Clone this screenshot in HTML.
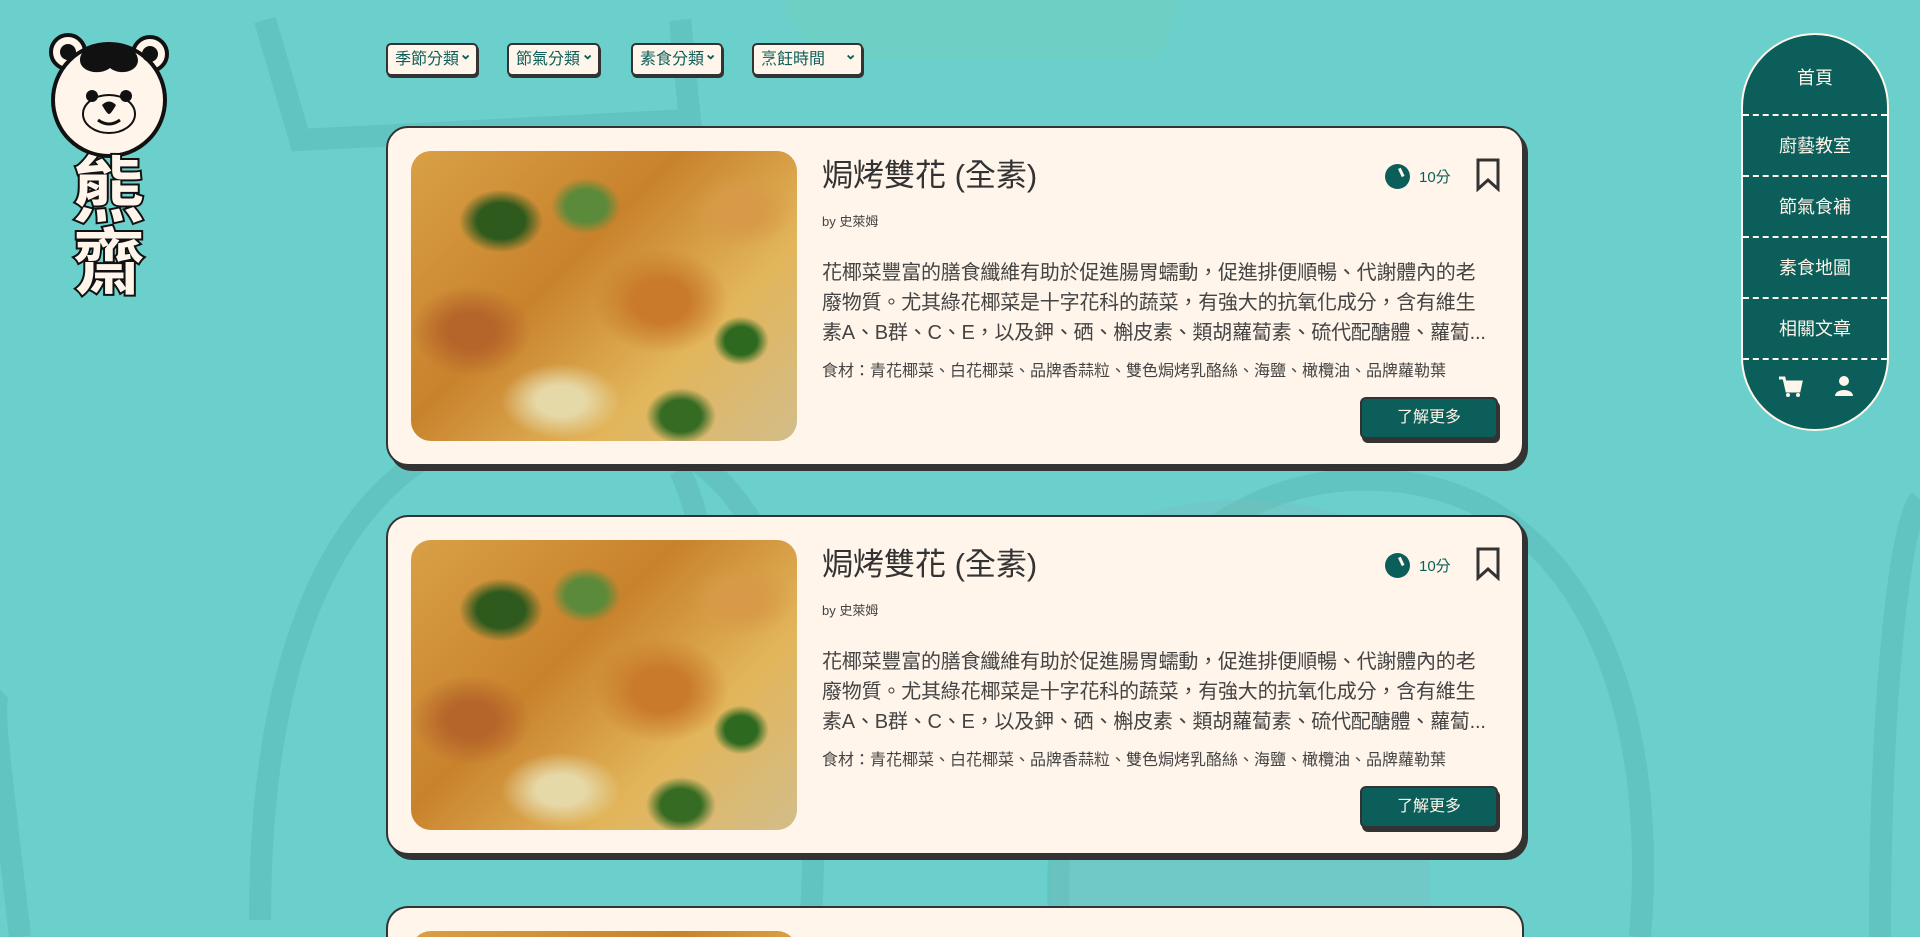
<!DOCTYPE html>
<html><head><meta charset="utf-8"><style>
*{box-sizing:border-box;margin:0;padding:0}
html{width:1920px;height:937px;overflow:hidden}
body{width:1920px;height:937px;overflow:hidden;background:#6bcfcb;font-family:"Liberation Sans","Noto Sans CJK TC",sans-serif;position:relative}
.bg{position:absolute;inset:0}
.sel{position:absolute;top:43px;height:33px;background:#fff5ea;border:2px solid #333;border-radius:5px;box-shadow:1px 2px 0 #333;color:#0b5e5a;font-size:16px;line-height:29px;padding-left:7px}
.sel:after{content:"⌄";position:absolute;right:4px;top:-5px;font-size:15px;color:#0b5e5a;font-weight:bold}
.card{position:absolute;left:386px;width:1138px;height:340px;background:#fff5ea;border:2px solid #333;border-radius:22px;box-shadow:4px 5px 0 #333;overflow:hidden}
.img{position:absolute;left:23px;top:23px;width:386px;height:290px;border-radius:20px;overflow:hidden;
background:radial-gradient(ellipse 60px 45px at 90px 70px,#2f5a1e 40%,transparent 70%),radial-gradient(ellipse 50px 40px at 175px 55px,#5a8a3a 40%,transparent 70%),radial-gradient(ellipse 40px 35px at 330px 190px,#2d6a1f 40%,transparent 70%),radial-gradient(ellipse 50px 40px at 270px 265px,#356b22 40%,transparent 70%),radial-gradient(ellipse 80px 60px at 60px 180px,#b5652a 30%,transparent 75%),radial-gradient(ellipse 90px 70px at 250px 150px,#c97a2a 30%,transparent 75%),radial-gradient(ellipse 70px 50px at 330px 60px,#d89a48 30%,transparent 75%),radial-gradient(ellipse 80px 50px at 150px 250px,#e6d9a8 30%,transparent 75%),linear-gradient(135deg,#d9a046,#c8822c 40%,#e2b55a 70%,#d3bd8a)}
.title{position:absolute;left:434px;top:22px;font-size:31px;color:#333}
.by{position:absolute;left:434px;top:83px;font-size:13px;color:#444}
.desc{position:absolute;left:434px;top:130px;width:700px;height:92px;overflow:hidden;font-size:20px;line-height:30px;color:#444;white-space:nowrap;letter-spacing:-0.2px}
.ing{position:absolute;left:434px;top:229px;font-size:16px;color:#444;white-space:nowrap}
.clock{position:absolute;left:997px;top:36px;width:25px;height:25px;border-radius:50%;background:#0b5e5a}
.clock:after{content:"";position:absolute;left:10px;top:5px;width:5px;height:9px;border-right:3px solid #fff5ea;transform:rotate(-25deg)}
.min{position:absolute;left:1031px;top:38px;font-size:15px;color:#0b5e5a}
.bm{position:absolute;left:1087px;top:30px}
.btn{position:absolute;left:972px;top:269px;width:138px;height:42px;background:#0b5e5a;border:2px solid #333;border-radius:6px;box-shadow:2px 4px 0 #333;color:#fff5ea;font-size:16px;text-align:center;line-height:38px}
.nav{position:absolute;left:1741px;top:33px;width:148px;height:398px;background:#0b5e5a;border:2px solid #fff5ea;border-radius:74px;overflow:hidden}
.nav div{height:61px;border-bottom:2px dashed #fff5ea;color:#fff5ea;font-size:18px;text-align:center;line-height:61px}
.nav div:first-child{height:81px;line-height:86px}
</style></head><body>
<svg class="bg" width="1920" height="937">
<g fill="none" stroke="#58b6b4" stroke-width="22" opacity=".45">
<path d="M265 20 L300 140 L690 120 L680 20"/>
<path d="M260 920 C 260 580 380 420 560 420 C 760 420 830 600 810 937"/>
<path d="M1060 937 C 1040 640 1200 470 1380 480 C 1580 490 1660 700 1640 937"/>
<path d="M1880 937 C 1880 700 1900 520 1920 500"/>
<path d="M20 937 C 0 760 -10 700 0 690"/>
<path d="M680 470 C 720 560 700 620 640 660"/>
</g>
<path d="M780 0 L1180 0 L1160 60 L820 60 Z" fill="#6fd0c0" opacity=".6"/>
<path d="M1060 560 C1150 480 1330 480 1430 560 L1430 937 L1050 937 Z" fill="#7fbcbc" opacity=".3"/>
</svg>

<svg style="position:absolute;left:46px;top:30px" width="130" height="270" viewBox="0 0 130 270">
<g stroke="#111" stroke-width="4" fill="#fff5ea">
<circle cx="22" cy="22" r="17"/><circle cx="104" cy="24" r="17"/>
<ellipse cx="63" cy="70" rx="56" ry="56"/>
</g>
<circle cx="22" cy="22" r="8" fill="#111"/><circle cx="104" cy="24" r="8" fill="#111"/>
<path d="M34 30 C34 8 90 6 92 30 C92 42 74 46 64 38 C54 46 34 42 34 30Z" fill="#111"/>
<circle cx="46" cy="66" r="6" fill="#111"/><circle cx="80" cy="66" r="6" fill="#111"/>
<ellipse cx="63" cy="84" rx="26" ry="19" fill="none" stroke="#111" stroke-width="2"/>
<path d="M56 75 Q63 68 70 75 Q65 84 63 84 Q61 84 56 75Z" fill="#111"/>
<path d="M52 90 Q63 98 74 90" fill="none" stroke="#111" stroke-width="3"/>
<text x="63" y="186" text-anchor="middle" font-size="72" font-weight="bold" fill="#fff5ea" stroke="#111" stroke-width="4" paint-order="stroke" font-family="Noto Sans CJK TC,sans-serif">熊</text>
<text x="63" y="258" text-anchor="middle" font-size="72" font-weight="bold" fill="#fff5ea" stroke="#111" stroke-width="4" paint-order="stroke" font-family="Noto Sans CJK TC,sans-serif">齋</text>
</svg>

<div class="sel" style="left:386px;width:92px">季節分類</div>
<div class="sel" style="left:507px;width:93px">節氣分類</div>
<div class="sel" style="left:631px;width:92px">素食分類</div>
<div class="sel" style="left:752px;width:111px">烹飪時間</div>

<div class="card" style="top:126px">
<div class="img"></div>
<div class="title">焗烤雙花 (全素)</div>
<div class="clock"></div><div class="min">10分</div>
<svg class="bm" width="26" height="34" viewBox="0 0 26 34"><path d="M3 2 H23 V31 L13 22 L3 31 Z" fill="none" stroke="#333" stroke-width="3"/></svg>
<div class="by">by 史萊姆</div>
<div class="desc">花椰菜豐富的膳食纖維有助於促進腸胃蠕動，促進排便順暢、代謝體內的老<br>廢物質。尤其綠花椰菜是十字花科的蔬菜，有強大的抗氧化成分，含有維生<br>素A、B群、C、E，以及鉀、硒、槲皮素、類胡蘿蔔素、硫代配醣體、蘿蔔...</div>
<div class="ing">食材：青花椰菜、白花椰菜、品牌香蒜粒、雙色焗烤乳酪絲、海鹽、橄欖油、品牌蘿勒葉</div>
<div class="btn">了解更多</div>
</div>

<div class="card" style="top:515px">
<div class="img"></div>
<div class="title">焗烤雙花 (全素)</div>
<div class="clock"></div><div class="min">10分</div>
<svg class="bm" width="26" height="34" viewBox="0 0 26 34"><path d="M3 2 H23 V31 L13 22 L3 31 Z" fill="none" stroke="#333" stroke-width="3"/></svg>
<div class="by">by 史萊姆</div>
<div class="desc">花椰菜豐富的膳食纖維有助於促進腸胃蠕動，促進排便順暢、代謝體內的老<br>廢物質。尤其綠花椰菜是十字花科的蔬菜，有強大的抗氧化成分，含有維生<br>素A、B群、C、E，以及鉀、硒、槲皮素、類胡蘿蔔素、硫代配醣體、蘿蔔...</div>
<div class="ing">食材：青花椰菜、白花椰菜、品牌香蒜粒、雙色焗烤乳酪絲、海鹽、橄欖油、品牌蘿勒葉</div>
<div class="btn">了解更多</div>
</div>

<div class="card" style="top:906px;height:31px;box-shadow:none;border-bottom:none;border-radius:22px 22px 0 0">
<div class="img" style="top:23px"></div>
</div>

<div class="nav">
<div>首頁</div><div>廚藝教室</div><div>節氣食補</div><div>素食地圖</div><div>相關文章</div>
<svg width="148" height="60" viewBox="0 0 148 60" style="display:block">
<path d="M36 18 H41 L44 31 H56 L58 22 H43" fill="none" stroke="#fff5ea" stroke-width="3"/>
<rect x="43" y="22" width="14" height="9" fill="#fff5ea"/>
<circle cx="45" cy="35" r="2" fill="#fff5ea"/><circle cx="55" cy="35" r="2" fill="#fff5ea"/>
<circle cx="101" cy="21" r="5" fill="#fff5ea"/>
<path d="M92 36 C92 28 110 28 110 36 Z" fill="#fff5ea"/>
</svg>
</div>
</body></html>
